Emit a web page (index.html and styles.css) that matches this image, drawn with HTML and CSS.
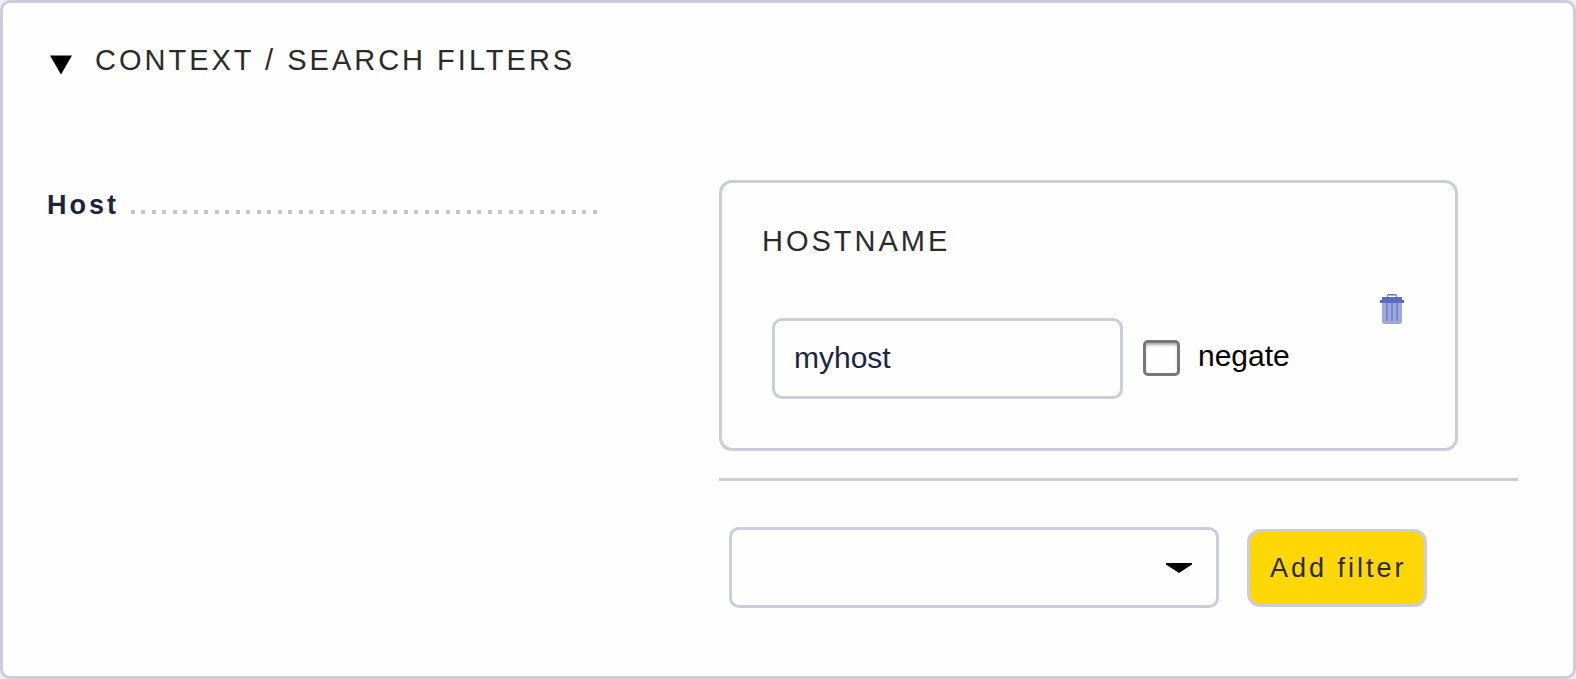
FILE: index.html
```html
<!DOCTYPE html>
<html lang="en">
<head>
<meta charset="utf-8">
<title>Context / Search Filters</title>
<link rel="stylesheet" href="styles.css">
</head>
<body>
<main class="panel">
  <h1 class="panel-title">
    <button class="toggle" type="button" aria-expanded="true">
      <svg class="toggle-icon" viewBox="0 0 22 20" aria-hidden="true"><path d="M0 0.5H22L11 19.5Z"/></svg>
      <span>CONTEXT / SEARCH FILTERS</span>
    </button>
  </h1>
  <div class="row">
    <div class="legend"><span>Host</span><span class="dots"></span></div>
    <div class="filters">
      <section class="filter">
        <div class="filter-body">
          <h2 class="filter-title">HOSTNAME</h2>
          <div class="filter-fields">
            <input class="text" type="text" value="myhost" aria-label="Hostname">
            <input class="check" type="checkbox" id="negate">
            <label class="check-label" for="negate">negate</label>
          </div>
        </div>
        <button class="delete" type="button" aria-label="Remove filter">
          <svg class="delete-icon" viewBox="0 0 24 30" aria-hidden="true">
            <path fill="#9fa8da" d="M2 8H22V27Q22 30 19 30H5Q2 30 2 27Z"/>
            <path fill="none" stroke="#7986cb" stroke-width="2" d="M7 9V27M12 9V27M17 9V27"/>
            <path fill="#5c6bc0" d="M7 3V2Q7 0 9 0H15Q17 0 17 2V3H22V6H24V9H0V6H2V3ZM8 3H16V1.5H8Z"/>
          </svg>
        </button>
      </section>
      <hr class="divider">
      <div class="add">
        <select class="select" aria-label="Filter to add"><option></option></select>
        <button class="button" type="button">Add filter</button>
        <svg class="select-arrow" viewBox="0 0 26 10" aria-hidden="true"><path d="M0 0H26V1.5L13 10L0 1.5Z"/></svg>
      </div>
    </div>
  </div>
</main>
</body>
</html>
```
FILE: styles.css
```css
* {
  box-sizing: border-box;
}

body {
  margin: 0;
  background: #f0f0f0;
  font-family: "Liberation Sans", Arial, sans-serif;
  font-size: 30px;
  line-height: 36px;
  color: #000;
}

.panel {
  min-height: 100vh;
  padding: 39px 55px 64px 44px;
  background: #fefefe;
  border: 3px solid #cbcddd;
  border-radius: 10px;
}

.panel-title,
.filter-title {
  margin: 0;
  font-size: 29px;
  font-weight: 400;
  letter-spacing: 3px;
  color: #2b2b2b;
}

.toggle {
  display: flex;
  align-items: center;
  gap: 23px;
  padding: 0 3px;
  border: 0;
  background: none;
  font: inherit;
  letter-spacing: inherit;
  color: inherit;
}

.toggle-icon {
  width: 22px;
  height: 20px;
  margin-top: 10px;
  fill: #000;
}

.row {
  display: grid;
  grid-template-columns: minmax(0, 551fr) minmax(0, 799fr);
  column-gap: 121px;
  margin-top: 102px;
}

.legend {
  display: flex;
  align-items: flex-start;
  gap: 12px;
  padding-top: 7px;
  font-size: 27px;
  font-weight: 700;
  letter-spacing: 3px;
  color: #1b2540;
}

.dots {
  flex: 1;
  height: 4px;
  margin-top: 23px;
  background: linear-gradient(90deg, #c8c8c8 4px, transparent 4px 10px, #c8c8c8 10px 14px, transparent 14px) 0 0 / 21px 4px repeat-x;
}

.filter {
  display: flex;
  justify-content: space-between;
  align-items: center;
  margin-right: 60px;
  padding: 40px 51px 49px 40px;
  border: 3px solid #cbcddd;
  border-radius: 13px;
}

.filter-fields {
  display: flex;
  align-items: center;
  margin: 59px 0 0 10px;
}

.text,
.select {
  height: 81px;
  border: 3px solid #cbcddd;
  border-radius: 10px;
  background: #fefefe;
  font: inherit;
  color: #1b2540;
}

.text {
  width: 351px;
  padding: 0 19px 2px;
}

.check {
  appearance: none;
  width: 37px;
  height: 36px;
  margin: 0 18px 2px 20px;
  border: 3px solid #75777b;
  border-radius: 5px;
  background: #fefefe;
  box-shadow: inset 0 3px 3px -1px #aaa;
}

.check-label {
  padding-bottom: 6px;
}

.delete {
  display: flex;
  margin-bottom: 5px;
  padding: 0;
  border: 0;
  background: none;
}

.delete-icon {
  width: 24px;
  height: 30px;
}

.divider {
  height: 3px;
  margin: 27px 0 46px;
  border: 0;
  background: #cbcddd;
}

.add {
  display: grid;
  grid-template-columns: 490px auto;
  justify-content: start;
  align-items: center;
  column-gap: 28px;
  padding-left: 10px;
}

.select,
.select-arrow {
  grid-row: 1;
  grid-column: 1;
}

.select {
  appearance: none;
  width: 100%;
  padding: 0 60px 0 20px;
}

.select-arrow {
  justify-self: end;
  width: 26px;
  height: 10px;
  margin-right: 27px;
  pointer-events: none;
}

.button {
  grid-row: 1;
  grid-column: 2;
  height: 78px;
  padding: 0 17px 0 20px;
  border: 3px solid #cbcddd;
  border-radius: 13px;
  background: #ffd706;
  font: inherit;
  font-size: 27px;
  letter-spacing: 3px;
  color: #2b2b2b;
}
```
